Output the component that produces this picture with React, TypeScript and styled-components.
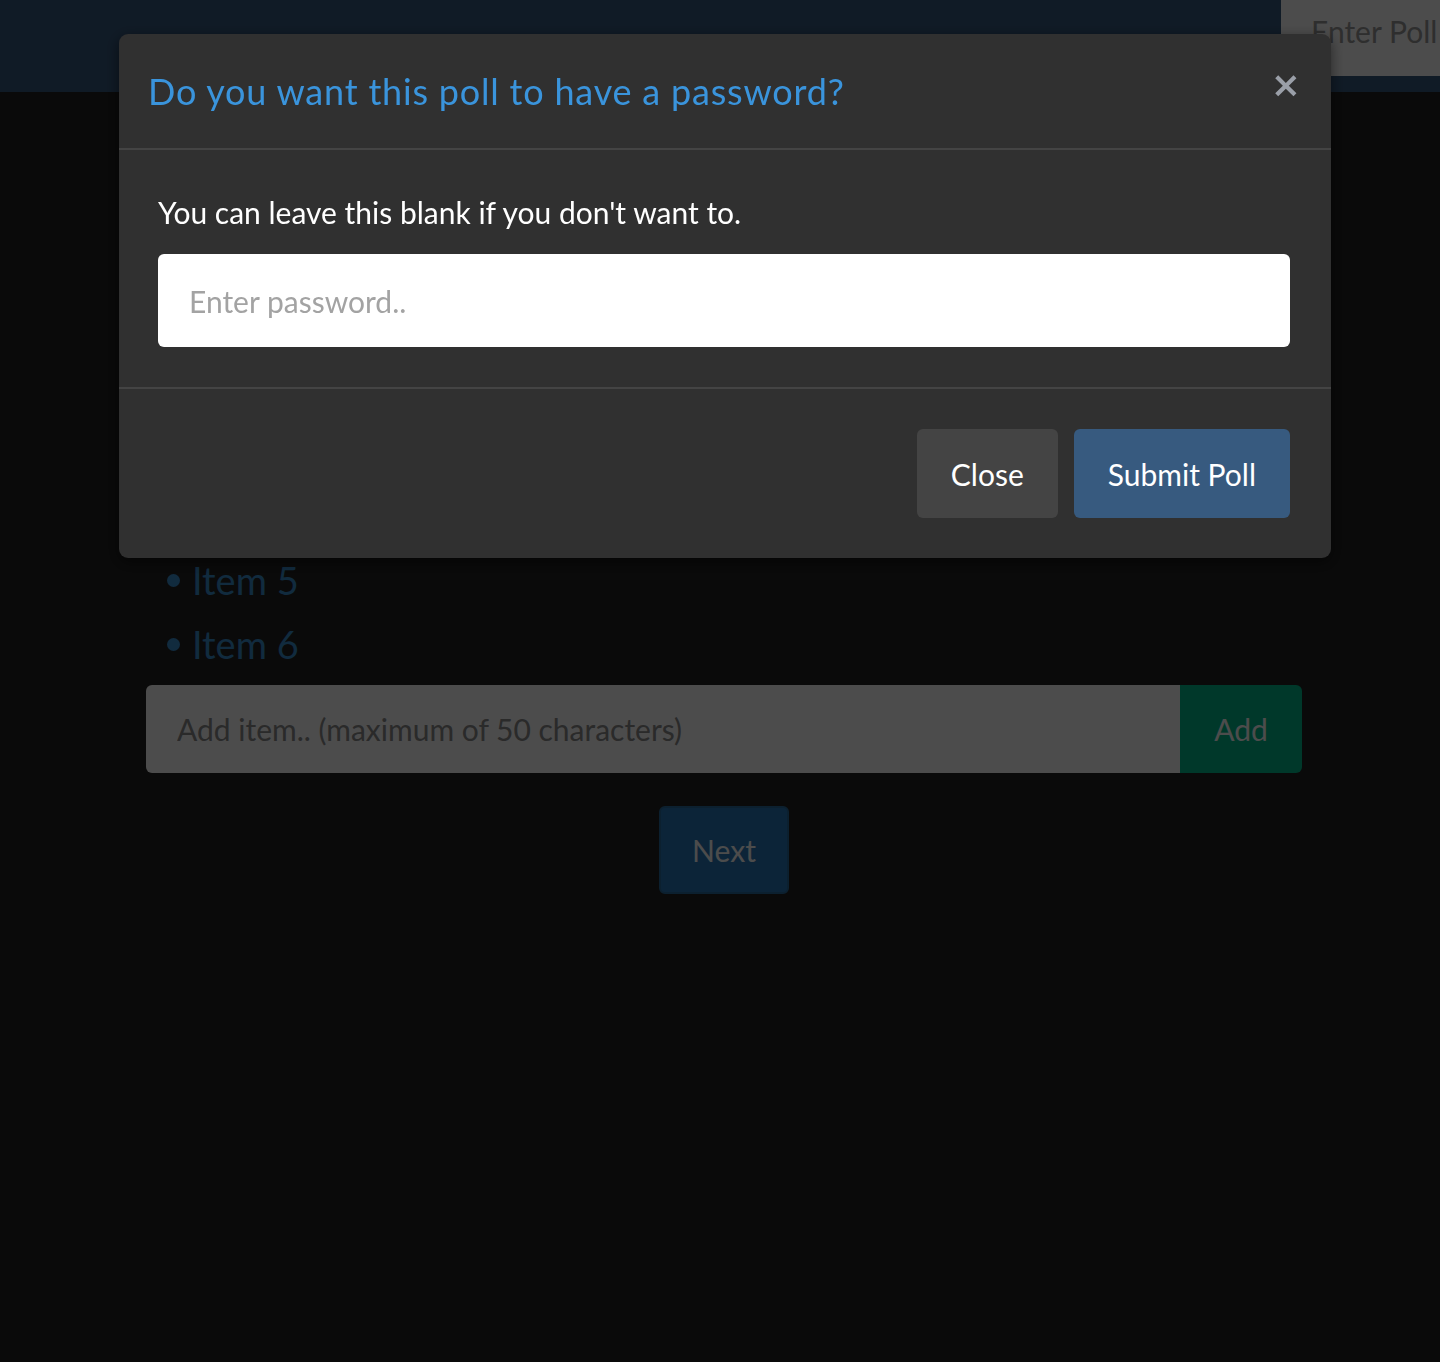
import React from 'react'
import styled, { createGlobalStyle } from 'styled-components'

const GlobalStyle = createGlobalStyle`
  html, body {
    margin: 0;
    padding: 0;
    background: #222;
    font-family: Lato, 'Noto Sans', sans-serif;
  }
  * { box-sizing: border-box; }
`

const Page = styled.div`
  min-height: 1362px;
  background: #222;
`

const Navbar = styled.nav`
  height: 92px;
  background: #375a7f;
  display: flex;
  justify-content: flex-end;
  align-items: flex-start;
  overflow: hidden;
`

const PollIdInput = styled.input`
  width: 300px;
  height: 76px;
  margin-right: -141px;
  border: none;
  background: #fff;
  padding: 0 30px 14px;
  font-family: inherit;
  font-size: 30px;
  color: #222;
  outline: none;
  &::placeholder { color: #9a9a9a; }
`

const Main = styled.main`
  width: 1156px;
  margin-left: 146px;
  padding-top: 200px;
  display: flex;
  flex-direction: column;
`

const ItemList = styled.ul`
  margin: 0 0 9px;
  padding: 0 0 0 21px;
  list-style: none;
`

const Item = styled.li`
  display: flex;
  align-items: center;
  gap: 12px;
  height: 64px;
  font-size: 38px;
  color: #3a8fd0;
  &::before {
    content: '';
    width: 13px;
    height: 13px;
    border-radius: 50%;
    background: currentColor;
  }
`

const AddRow = styled.div`
  display: flex;
  height: 88px;
  border-radius: 6px;
  overflow: hidden;
`

const AddInput = styled.input`
  flex: 1;
  border: none;
  background: #fff;
  padding: 0 31px;
  font-family: inherit;
  font-size: 30px;
  outline: none;
  &::placeholder { color: #8c8c8c; }
`

const AddButton = styled.button`
  width: 122px;
  border: none;
  background: #00bc8c;
  color: #fff;
  font-family: inherit;
  font-size: 30px;
`

const NextButton = styled.button`
  align-self: center;
  margin-top: 33px;
  width: 130px;
  height: 88px;
  border: 2px solid #2b6d9e;
  border-radius: 6px;
  background: #2a7abb;
  color: #fff;
  font-family: inherit;
  font-size: 30px;
`

const Backdrop = styled.div`
  position: fixed;
  inset: 0;
  background: rgba(0, 0, 0, 0.7);
`

const ModalLayer = styled.div`
  position: fixed;
  inset: 0;
  padding: 34px 0 0 119px;
`

const Modal = styled.div`
  width: 1212px;
  background: #303030;
  border-radius: 9px;
  box-shadow: 0 4px 14px rgba(0, 0, 0, 0.5);
  display: flex;
  flex-direction: column;
`

const ModalHeader = styled.div`
  height: 116px;
  padding: 0 30px 0 29px;
  display: flex;
  align-items: center;
  justify-content: space-between;
  border-bottom: 2px solid #444;
`

const Title = styled.h5`
  margin: 0;
  font-size: 36px;
  font-weight: 400;
  color: #3a94dc;
  letter-spacing: 0.8px;
`

const CloseX = styled.button`
  border: none;
  background: none;
  padding: 0;
  margin-top: -14px;
  font-family: 'DejaVu Sans', sans-serif;
  font-size: 36px;
  font-weight: 700;
  color: #9a9fa8;
`

const ModalBody = styled.div`
  padding: 44px 41px 40px 39px;
  display: flex;
  flex-direction: column;
  gap: 24px;
  border-bottom: 2px solid #444;
`

const Hint = styled.p`
  margin: 0;
  font-size: 30px;
  color: #fff;
`

const PasswordInput = styled.input`
  height: 93px;
  border: none;
  border-radius: 6px;
  background: #fff;
  padding: 0 31px;
  font-family: inherit;
  font-size: 30px;
  outline: none;
  &::placeholder { color: #a3a3a3; }
`

const ModalFooter = styled.div`
  padding: 40px 41px 40px;
  display: flex;
  justify-content: flex-end;
  gap: 16px;
`

const FooterButton = styled.button<{ $primary?: boolean }>`
  height: 89px;
  padding: 0 34px;
  border: none;
  border-radius: 6px;
  background: ${p => (p.$primary ? '#375a7f' : '#444')};
  color: #fff;
  font-family: inherit;
  font-size: 30px;
`

const App = () => {
  return (
    <>
      <GlobalStyle />
      <Page>
        <Navbar>
          <PollIdInput placeholder='Enter Poll ID' />
        </Navbar>
        <Main>
          <ItemList>
            {[1, 2, 3, 4, 5, 6].map(n => (
              <Item key={n}>Item {n}</Item>
            ))}
          </ItemList>
          <AddRow>
            <AddInput placeholder='Add item.. (maximum of 50 characters)' />
            <AddButton>Add</AddButton>
          </AddRow>
          <NextButton>Next</NextButton>
        </Main>
      </Page>
      <Backdrop />
      <ModalLayer>
        <Modal>
          <ModalHeader>
            <Title>Do you want this poll to have a password?</Title>
            <CloseX>×</CloseX>
          </ModalHeader>
          <ModalBody>
            <Hint>You can leave this blank if you don't want to.</Hint>
            <PasswordInput placeholder='Enter password..' />
          </ModalBody>
          <ModalFooter>
            <FooterButton>Close</FooterButton>
            <FooterButton $primary>Submit Poll</FooterButton>
          </ModalFooter>
        </Modal>
      </ModalLayer>
    </>
  )
}

export default App
